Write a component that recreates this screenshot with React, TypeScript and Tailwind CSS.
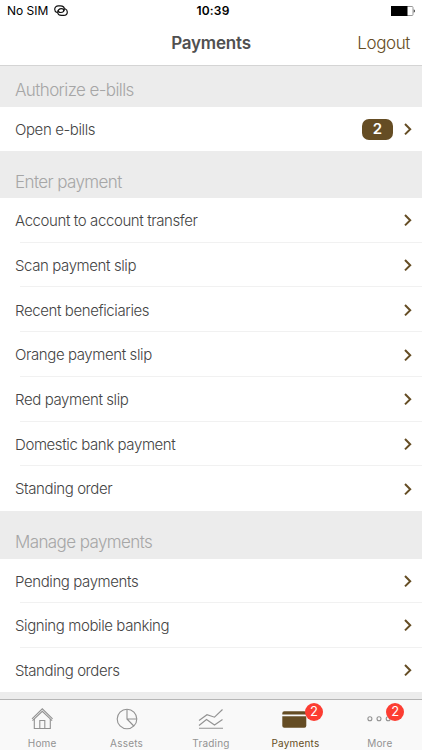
import React from 'react';

type Item = { label: string; count?: number };

const openBills: Item[] = [{ label: 'Open e-bills', count: 2 }];

const enterPayment: Item[] = [
  { label: 'Account to account transfer' },
  { label: 'Scan payment slip' },
  { label: 'Recent beneficiaries' },
  { label: 'Orange payment slip' },
  { label: 'Red payment slip' },
  { label: 'Domestic bank payment' },
  { label: 'Standing order' },
];

const managePayments: Item[] = [
  { label: 'Pending payments' },
  { label: 'Signing mobile banking' },
  { label: 'Standing orders' },
];

function Chevron() {
  return (
    <svg width="10" height="14" viewBox="0 0 10 14" fill="none" stroke="#654d24" strokeWidth="2">
      <path d="M2 2 7.200 7.200 2 12.400" />
    </svg>
  );
}

function LinkIcon() {
  return (
    <svg width="14" height="12" viewBox="0 0 14 12" fill="none" stroke="#111" strokeWidth="1.2" strokeLinecap="round">
      <path d="M3 7.500C1.500 7 .7 5.700.7 4.300.7 2.300 2.200.9 4.300.9h2.100c2.200 0 3.900 1.300 3.900 3.100 0 2-1.500 3.500-3.700 3.500-1.400 0-2.300-.7-2.300-1.700" />
      <path d="M11 3.700c1.500.5 2.300 1.800 2.300 3.200 0 2-1.500 3.400-3.600 3.400H7.600c-2.200 0-3.900-1.300-3.900-3.100 0-2 1.500-3.500 3.700-3.500 1.400 0 2.300.7 2.300 1.700" />
    </svg>
  );
}

function SectionTitle({ title, className }: { title: string; className: string }) {
  return (
    <h2 className={`shrink-0 bg-[#ececec] pl-[15px] text-[17px] font-light leading-5 tracking-[-0.6px] text-[#a6a6a6] ${className}`}>
      {title}
    </h2>
  );
}

function List({ items, className }: { items: Item[]; className: string }) {
  return (
    <ul className={`flex shrink-0 flex-col bg-white ${className}`}>
      {items.map((item, i) => (
        <li key={item.label} className="flex flex-1 flex-col">
          {i > 0 && <div className="-mt-px ml-5 h-px bg-[#f1f1f1]" />}
          <div className="flex flex-1 items-center pl-[15px] pr-[9px]">
            <span className="flex-1 pt-[2px] text-[15px] font-light tracking-[-0.4px] text-[#444]">{item.label}</span>
            {item.count && (
              <span className="mr-[10px] flex h-[21px] w-[31px] items-center justify-center rounded-[7px] bg-[#654d24] text-[15px] font-semibold text-white">
                {item.count}
              </span>
            )}
            <Chevron />
          </div>
        </li>
      ))}
    </ul>
  );
}

const tabs = [
  {
    label: 'Home',
    icon: (
      <>
        <path d="M6 12.800 16.300 2.800l10.300 10M6.500 14.700 16.300 5.300l9.800 9.400" />
        <path d="M8.300 13v9.500h16V13M13.800 22.500v-8h5v8" />
      </>
    ),
  },
  {
    label: 'Assets',
    icon: (
      <>
        <circle cx="16" cy="13" r="9.800" />
        <path d="M16 3.200V13h9.800M16 13l6.800 7" />
      </>
    ),
  },
  {
    label: 'Trading',
    icon: <path d="m4 14.500 8-5.800 7.500 2.500 8-7.700M4 19.500l7.500-6 8 5.500 8-5.500M4 22.300h24" />,
  },
  {
    label: 'Payments',
    badge: 2,
    badgePosition: 'left-[25.5px]',
    icon: (
      <g fill="#654d24" stroke="none">
        <path d="M5.200 5.300h20.100a2 2 0 0 1 2 2v1.300h-24V7.300a2 2 0 0 1 2-2Z" />
        <path d="M3.300 10.300h24v9.500a2 2 0 0 1-2 2h-20a2 2 0 0 1-2-2Z" />
      </g>
    ),
  },
  {
    label: 'More',
    badge: 2,
    badgePosition: 'left-[22.5px]',
    icon: (
      <>
        <circle cx="5.900" cy="12.800" r="2" />
        <circle cx="15" cy="12.800" r="2" />
        <circle cx="24.200" cy="12.800" r="2" />
      </>
    ),
  },
];

export default function App() {
  return (
    <div className="flex h-[750px] w-full flex-col overflow-hidden bg-[#ececec] font-['Inter','Liberation_Sans',sans-serif]">
      <header className="h-[66px] shrink-0 border-b border-[#d4d4d4] bg-white">
        <div className="grid h-[22px] grid-cols-3 items-center pl-[7px] pr-[6px] text-[12px] leading-none text-black">
          <div className="flex items-center gap-[6px]">
            <span>No SIM</span>
            <LinkIcon />
          </div>
          <span className="pl-[3px] text-center text-[12px] font-semibold tracking-[0.2px]">10:39</span>
          <svg className="justify-self-end" width="25" height="12" viewBox="0 0 25 12">
            <rect x="0.500" y="1.500" width="21.500" height="9" rx="1" fill="none" stroke="#999" />
            <path d="M0 1h16.500v10H0Z" fill="#000" />
            <path d="M22.800 4.300a2 2 0 0 1 0 3.400Z" fill="#000" />
          </svg>
        </div>
        <div className="grid h-[43px] grid-cols-3 items-center pr-3 pt-px">
          <h1 className="col-start-2 pl-3 text-center text-[17px] font-semibold tracking-[-0.2px] text-[#505050]">
            Payments
          </h1>
          <button className="justify-self-end text-[17px] font-light tracking-[-0.4px] text-[#654d24]">Logout</button>
        </div>
      </header>

      <main className="flex flex-1 flex-col overflow-hidden">
        <SectionTitle title="Authorize e-bills" className="h-[41px] pt-[14px]" />
        <List items={openBills} className="h-11" />
        <SectionTitle title="Enter payment" className="h-[47px] pt-[21px]" />
        <List items={enterPayment} className="h-[313px]" />
        <SectionTitle title="Manage payments" className="h-12 pt-[21px]" />
        <List items={managePayments} className="h-[133px]" />
      </main>

      <nav className="grid h-[51px] shrink-0 grid-cols-5 border-t border-[#b5b5b5] bg-[#f9f9f9]">
        {tabs.map((tab) => (
          <div
            key={tab.label}
            className={`flex flex-col items-center pt-[6px] ${tab.label === 'Payments' ? 'text-[#654d24]' : 'text-[#929292]'}`}
          >
            <div className="relative">
              <svg width="32" height="26" viewBox="0 0 32 26" fill="none" stroke="currentColor" strokeWidth="1.100">
                {tab.icon}
              </svg>
              {tab.badge && (
                <span
                  className={`absolute -top-[3px] flex size-[18px] items-center justify-center rounded-full bg-[#fc3d32] text-[13px] text-white ${tab.badgePosition}`}
                >
                  {tab.badge}
                </span>
              )}
            </div>
            <span className="mt-[5px] text-[10px] leading-[12px] tracking-[0.2px]">{tab.label}</span>
          </div>
        ))}
      </nav>
    </div>
  );
}
